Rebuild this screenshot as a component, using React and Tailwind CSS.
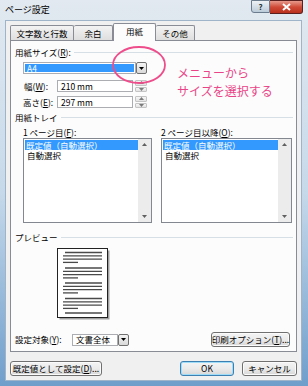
import React from "react";

const Acc = ({ children }) => <span className="underline underline-offset-1">{children}</span>;

const GroupHeader = ({ children, className = "" }) => (
  <div className={`flex items-center h-[12px] ${className}`}>
    <span className="whitespace-nowrap">{children}</span>
    <div className="ml-[3px] flex-1 h-px bg-[#d5dfe5]" />
  </div>
);

const DropBtn = ({ className = "" }) => (
  <div
    className={`w-[11px] h-full flex items-center justify-center border border-[#707070] rounded-[2px] bg-linear-to-b from-[#f4f4f4] to-[#d9d9d9] ${className}`}
  >
    <svg width="5" height="3" viewBox="0 0 5 3">
      <path d="M0 0H5L2.5 3Z" fill="#000" />
    </svg>
  </div>
);

const Spinner = () => (
  <div className="ml-[2px] w-[12px] h-full flex flex-col gap-px">
    {["M0 3H5L2.5 0Z", "M0 0H5L2.5 3Z"].map((d) => (
      <div
        key={d}
        className="flex-1 flex items-center justify-center border border-[#c4c4c4] rounded-[1px] bg-linear-to-b from-[#f7f7f7] to-[#e3e3e3]"
      >
        <svg width="5" height="3" viewBox="0 0 5 3">
          <path d={d} fill="#7a7a7a" />
        </svg>
      </div>
    ))}
  </div>
);

const Btn = ({ children, className = "", primary }) => (
  <div
    className={`h-[15px] flex items-center justify-center rounded-[3px] border whitespace-nowrap ${
      primary
        ? "border-[#3c7fb1] shadow-[inset_0_0_0_1px_#9fdcf8]"
        : "border-[#707070] shadow-[inset_0_0_0_1px_#fbfbfb]"
    } bg-linear-to-b from-[#f4f4f4] via-[#ebebeb] to-[#d7d7d7] ${className}`}
  >
    {children}
  </div>
);

const ListBox = ({ className = "" }) => (
  <div className={`h-[85px] border border-[#828790] bg-white flex ${className}`}>
    <div className="flex-1 pt-px pl-px">
      <div className="h-[10px] flex items-center bg-[#3399ff] text-white pl-px">既定値（自動選択）</div>
      <div className="h-[10px] flex items-center pl-[2px]">自動選択</div>
    </div>
    <div className="w-[13px] bg-[#ececec] flex flex-col justify-between items-center py-[4px]">
      <svg width="5" height="3" viewBox="0 0 5 3">
        <path d="M0 3H5L2.5 0Z" fill="#606060" />
      </svg>
      <svg width="5" height="3" viewBox="0 0 5 3">
        <path d="M0 0H5L2.5 3Z" fill="#606060" />
      </svg>
    </div>
  </div>
);

const PagePreview = () => {
  const lines = [];
  const groups = [4.5, 20, 35, 50.5, 65];
  groups.forEach((gy, gi) => {
    const n = gi === groups.length - 1 ? 1 : 4;
    for (let i = 0; i < n; i++) {
      const y = gy + i * 3.3;
      const x1 = i === 0 ? 8 : 6;
      const x2 = i === 3 ? 21 : 45;
      lines.push(<line key={`${gi}-${i}`} x1={x1} x2={x2} y1={y} y2={y} stroke="#4a4a4a" strokeWidth="1.3" />);
    }
  });
  return (
    <svg width="53" height="72" viewBox="0 0 53 72" className="ml-[42px] mt-[5px] shrink-0">
      <rect x="2.5" y="2.5" width="50" height="69" fill="#a0a0a0" />
      <rect x="0.5" y="0.5" width="50" height="69" fill="#fff" stroke="#222" />
      {lines}
    </svg>
  );
};

export default function App() {
  return (
    <div className="relative w-[308px] h-[386px] overflow-hidden flex flex-col text-[8.5px] leading-none text-black [font-family:'Noto_Sans_CJK_JP',sans-serif] bg-linear-to-b from-[#e2e9f0] via-[#c6d9ea] to-[#6f9ecb]">
      {/* title bar */}
      <div className="h-[20px] flex items-start pl-[5px] pr-[5px] shrink-0">
        <span className="mt-[5px] text-[9px]">ページ設定</span>
        <div className="ml-auto flex">
          <div className="w-[19px] h-[13px] flex items-center justify-center border border-[#6b7c8f] rounded-bl-[3px] bg-linear-to-b from-[#eef2f6] to-[#bccbd9] text-[8px] font-bold text-[#233]">
            ?
          </div>
          <div className="w-[33px] h-[14px] flex items-center justify-center border border-[#5a2020] border-l-0 rounded-br-[3px] bg-linear-to-b from-[#e6998c] via-[#cf4a37] to-[#b9301c]">
            <svg width="9" height="8" viewBox="0 0 9 8">
              <path d="M1 1L8 7M8 1L1 7" stroke="#fff" strokeWidth="2" />
            </svg>
          </div>
        </div>
      </div>

      {/* client */}
      <div className="ml-[5px] mr-[6px] mb-[5px] flex-1 border border-[#9fb4c9] bg-[#f0f0f0] flex flex-col">
        {/* tabs */}
        <div className="mt-[2px] pl-[4px] h-[17px] flex items-end">
          <div className="w-[64px] h-[15px] flex items-center justify-center border border-b-0 border-[#898c95] rounded-t-[2px] bg-linear-to-b from-[#f3f3f3] to-[#dedede]">
            文字数と行数
          </div>
          <div className="w-[39px] h-[15px] flex items-center justify-center border border-b-0 border-l-0 border-[#898c95] rounded-t-[2px] bg-linear-to-b from-[#f3f3f3] to-[#dedede]">
            余白
          </div>
          <div className="relative z-10 w-[43px] h-[18px] -mb-px flex items-center justify-center border border-b-0 border-[#898c95] rounded-t-[2px] bg-[#fcfcfc] pb-[2px]">
            用紙
          </div>
          <div className="w-[39px] h-[15px] flex items-center justify-center border border-b-0 border-l-0 border-[#898c95] rounded-t-[2px] bg-linear-to-b from-[#f3f3f3] to-[#dedede]">
            その他
          </div>
        </div>

        {/* panel */}
        <div className="ml-[4px] w-[287px] border border-[#898c95] bg-[#fcfcfc] pl-[4px] pr-[3px] pb-[4px] flex flex-col">
          <GroupHeader className="mt-[5px]">
            用紙サイズ(<Acc>R</Acc>):
          </GroupHeader>

          <div className="mt-[4px] ml-[8px] w-[124px] h-[12px] flex">
            <div className="flex-1 border border-[#abadb3] bg-white p-px">
              <div className="h-full bg-[#3399ff] text-white flex items-center pl-[2px]">A4</div>
            </div>
            <DropBtn />
          </div>

          <div className="mt-[6px] ml-[9px] h-[12px] flex items-center">
            <span className="w-[33px]">
              幅(<Acc>W</Acc>):
            </span>
            <div className="w-[76px] h-full border border-[#abadb3] bg-white flex items-center pl-[3px]">210 mm</div>
            <Spinner />
          </div>
          <div className="mt-[4px] ml-[8px] h-[12px] flex items-center">
            <span className="w-[34px]">
              高さ(<Acc>E</Acc>):
            </span>
            <div className="w-[76px] h-full border border-[#abadb3] bg-white flex items-center pl-[3px]">297 mm</div>
            <Spinner />
          </div>

          <GroupHeader className="mt-[3px]">用紙トレイ</GroupHeader>

          <div className="mt-[3px] ml-[8px] flex gap-[9px]">
            <div className="w-[129px] flex flex-col">
              <div className="h-[12px] flex items-center">
                1 ページ目(<Acc>F</Acc>):
              </div>
              <ListBox />
            </div>
            <div className="w-[131px] flex flex-col">
              <div className="h-[12px] flex items-center">
                2 ページ目以降(<Acc>O</Acc>):
              </div>
              <ListBox />
            </div>
          </div>

          <GroupHeader className="mt-[8px]">プレビュー</GroupHeader>

          <PagePreview />

          <div className="mt-[12px] h-[15px] flex items-center">
            <span className="w-[57px]">
              設定対象(<Acc>Y</Acc>):
            </span>
            <div className="h-[12px] flex">
              <div className="w-[46px] border border-[#abadb3] bg-white flex items-center pl-[3px]">文書全体</div>
              <DropBtn />
            </div>
            <Btn className="ml-auto mr-[3px] w-[79px]">
              印刷オプション(<Acc>T</Acc>)...
            </Btn>
          </div>
        </div>

        {/* bottom buttons */}
        <div className="mt-[9px] flex px-[4px]">
          <Btn className="w-[92px]">
            既定値として設定(<Acc>D</Acc>)...
          </Btn>
          <Btn primary className="ml-auto w-[54px]">
            OK
          </Btn>
          <Btn className="ml-[8px] w-[55px]">キャンセル</Btn>
        </div>
      </div>

      {/* annotation */}
      <svg className="absolute left-0 top-0 pointer-events-none" width="308" height="386">
        <ellipse cx="139" cy="65" rx="26" ry="18" fill="none" stroke="#ee4d8b" strokeWidth="1.8" />
      </svg>
      <div className="absolute left-[177px] top-[64px] text-[12px] leading-[18px] text-[#e94487]">
        <div>メニューから</div>
        <div>サイズを選択する</div>
      </div>
    </div>
  );
}
